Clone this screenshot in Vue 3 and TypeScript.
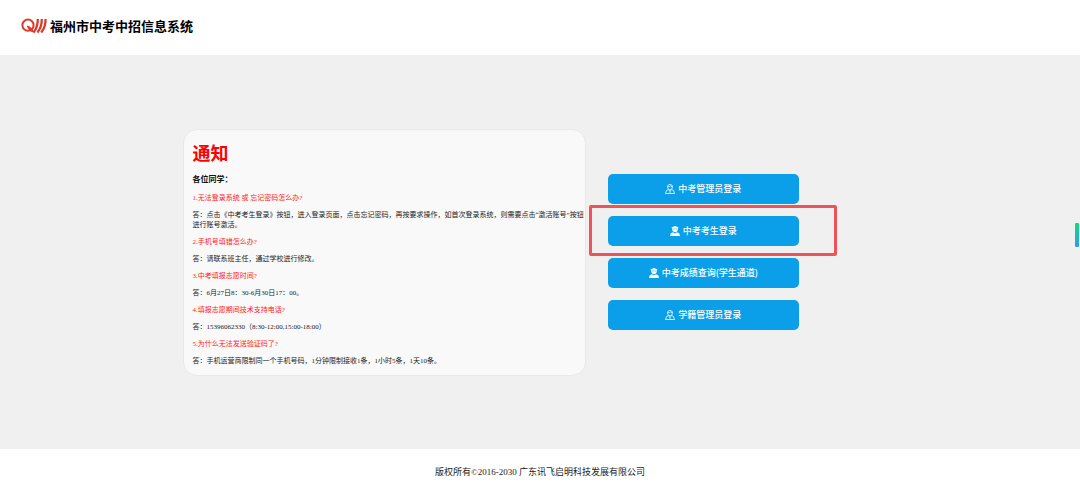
<script setup lang="ts">
interface Notice {
  question: string
  answer: string
}

interface Entry {
  label: string
  icon: 'admin' | 'student'
  marked?: boolean
}

const notices: Notice[] = [
  {
    question: '1.无法登录系统 或 忘记密码怎么办?',
    answer:
      '答：点击《中考考生登录》按钮，进入登录页面，点击忘记密码，再按要求操作，如首次登录系统，则需要点击“激活账号”按钮进行账号激活。',
  },
  { question: '2.手机号填错怎么办?', answer: '答：请联系班主任，通过学校进行修改。' },
  { question: '3.中考填报志愿时间?', answer: '答：6月27日8：30-6月30日17：00。' },
  { question: '4.填报志愿期间技术支持电话?', answer: '答：15396062330（8:30-12:00,15:00-18:00）' },
  {
    question: '5.为什么无法发送验证码了?',
    answer: '答：手机运营商限制同一个手机号码，1分钟限制接收1条，1小时5条，1天10条。',
  },
]

const entries: Entry[] = [
  { label: '中考管理员登录', icon: 'admin' },
  { label: '中考考生登录', icon: 'student', marked: true },
  { label: '中考成绩查询(学生通道)', icon: 'student' },
  { label: '学籍管理员登录', icon: 'admin' },
]
</script>

<template>
  <div class="page">
    <header class="header">
      <svg class="logo" viewBox="0 0 26 16" aria-hidden="true">
        <circle cx="7" cy="7.2" r="5.6" fill="none" stroke="#dc3a2c" stroke-width="2" />
        <path d="M5.8 7.6C9.4 8.2 11.6 10.4 13 14.6C9.2 14.2 6.8 11.6 5.8 7.6Z" fill="#dc3a2c" />
        <path
          d="M16.8 1C16.8 6.4 15.6 10.8 12.6 14.4M20.8 1C20.8 6.4 19.6 10.8 16.4 14.4M24.600 1C24.600 6.4 23.400 10.800 20.200 14.400"
          fill="none"
          stroke="#dc3a2c"
          stroke-width="2.3"
        />
      </svg>
      <h1 class="title">福州市中考中招信息系统</h1>
    </header>

    <main class="main">
      <div class="content">
        <section class="notice">
          <h2 class="notice-title">通知</h2>
          <h3 class="greeting">各位同学：</h3>
          <template v-for="item in notices" :key="item.question">
            <p class="question">{{ item.question }}</p>
            <p class="answer">{{ item.answer }}</p>
          </template>
        </section>

        <nav class="entries">
          <div v-for="entry in entries" :key="entry.label" class="entry">
            <button type="button" class="entry-button">
              <svg v-if="entry.icon === 'admin'" class="icon" viewBox="0 0 20 20" aria-hidden="true">
                <g fill="none" stroke="currentColor" stroke-width="1.6" stroke-linejoin="round">
                  <path d="M5.2 5.6C5.2 2.4 7 1 10 1s4.800 1.400 4.800 4.600S12.800 11.600 10 11.600S5.200 8.800 5.200 5.600Z" />
                  <path d="M5.400 5.400C8 5.400 10.500 4.800 11.500 3.600C12.200 4.800 13.200 5.400 14.600 5.400" />
                  <path d="M7 11L3 13L1 19H19L17 13L13 11" />
                  <path d="M7 11.500L10 15L13 11.500M10 15V19" />
                </g>
              </svg>
              <svg v-else class="icon" viewBox="0 0 20 20" aria-hidden="true">
                <path
                  d="M10 0L17.500 3L15.500 4.400V7C15.500 10 13 12.400 10 12.400S4.500 10 4.500 7V4.400L2.500 3Z"
                  fill="currentColor"
                />
                <path d="M6 12.400L10 15L14 12.400L18.600 14.600L20 20H0L1.400 14.600Z" fill="currentColor" />
                <path d="M6 6.300C8.500 5.400 11.500 5.400 14 6.300" fill="none" stroke="#0a9fe8" stroke-width="1" />
              </svg>
              <span>{{ entry.label }}</span>
            </button>
            <span v-if="entry.marked" class="marker"></span>
          </div>
        </nav>
      </div>
    </main>

    <footer class="footer">版权所有©2016-2030 广东讯飞启明科技发展有限公司</footer>
    <span class="edge-handle"></span>
  </div>
</template>

<style>
body {
  margin: 0;
}
</style>

<style scoped>
.page {
  position: relative;
  display: flex;
  flex-direction: column;
  min-height: 100vh;
  background: #ffffff;
  color: #222222;
  font-family: 'Liberation Serif', 'Noto Sans CJK SC', serif;
}

.header {
  display: flex;
  align-items: center;
  gap: 3px;
  height: 55px;
  padding: 0 21px 4px;
  box-sizing: border-box;
}

.logo {
  width: 26px;
  height: 16px;
}

.title {
  margin: 0;
  color: #000000;
  font-family: 'Noto Sans CJK SC', sans-serif;
  font-size: 13px;
  font-weight: 700;
  line-height: 20px;
}

.main {
  display: flex;
  flex: 1;
  align-items: center;
  justify-content: center;
  background: #f0f0f0;
}

.content {
  display: flex;
  align-items: center;
  gap: 22px;
  width: 66.2%;
}

.notice {
  flex: 0 0 56.4%;
  box-sizing: border-box;
  padding: 11px 0 9px 9px;
  border: 1px solid #e8e8e8;
  border-radius: 14px;
  background: #f9f9f9;
}

.notice-title {
  margin: 0 0 7px;
  color: #ff0000;
  font-size: 18px;
  line-height: 26px;
}

.greeting {
  margin: 0 0 7px;
  color: #111111;
  font-size: 8px;
  line-height: 12px;
}

.question,
.answer {
  margin: 0 0 7px;
  font-size: 7px;
  line-height: 10px;
}

.question {
  color: #ff1a1a;
}

.answer:last-child {
  margin-bottom: 0;
}

.entries {
  display: flex;
  flex: 1;
  flex-direction: column;
  gap: 12px;
  min-width: 0;
}

.entry {
  position: relative;
  width: 66%;
}

.entry-button {
  display: flex;
  align-items: center;
  justify-content: center;
  gap: 3px;
  width: 100%;
  height: 30px;
  padding: 0;
  border: 0;
  border-radius: 5px;
  background: #0a9fe8;
  color: #ffffff;
  font-family: 'Noto Sans CJK SC', sans-serif;
  font-size: 9px;
  font-weight: 500;
  line-height: 14px;
  cursor: pointer;
}

.icon {
  width: 10px;
  height: 10px;
}

.marker {
  position: absolute;
  inset: -11px -38px -10px -19px;
  border: 3px solid #ee5359;
  border-radius: 2px;
  pointer-events: none;
}

.footer {
  display: flex;
  align-items: center;
  justify-content: center;
  height: 44px;
  padding-top: 2px;
  box-sizing: border-box;
  font-size: 9px;
  line-height: 14px;
}

.edge-handle {
  position: absolute;
  top: 223px;
  right: 1px;
  width: 4px;
  height: 24px;
  border-radius: 1px;
  background: linear-gradient(#12dc78, #2c9cf0);
}
</style>
